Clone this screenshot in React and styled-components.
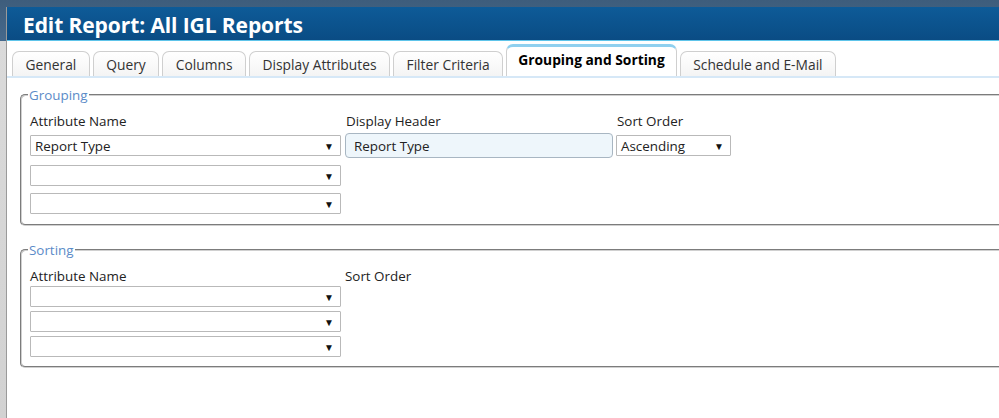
import React from "react";
import styled, { createGlobalStyle } from "styled-components";

const GlobalStyle = createGlobalStyle`
  html, body {
    margin: 0;
    padding: 0;
    overflow: hidden;
  }
  body {
    font-family: "Open Sans", "Liberation Sans", sans-serif;
    font-size: 13.4px;
    color: #222;
  }
`;

const Backdrop = styled.div`
  height: 418px;
  padding: 7px 0 0 6px;
  box-sizing: border-box;
  background: linear-gradient(
    to bottom,
    #3e5d7c 0,
    #46698c 41px,
    #dadada 41px,
    #d2d2d2 100%
  );
`;

const Dialog = styled.div`
  width: 1120px;
  height: 100%;
  background: #fff;
  border-left: 1px solid #9a9a9a;
`;

const TitleBar = styled.div`
  height: 33px;
  display: flex;
  align-items: center;
  padding-left: 16px;
  background: linear-gradient(to bottom, #0e5b98 0%, #0a4c84 100%);
  border-bottom: 1px solid #5ec4ea;
`;

const Title = styled.h1`
  margin: 0 0 -2px 0;
  font-size: 21px;
  font-weight: 700;
  color: #fff;
  letter-spacing: -0.1px;
`;

const TabBar = styled.div`
  display: flex;
  align-items: flex-end;
  gap: 3px;
  height: 35px;
  padding-left: 5px;
  border-bottom: 2px solid #d6e8f7;
`;

const Tab = styled.div`
  display: flex;
  align-items: center;
  justify-content: center;
  box-sizing: border-box;
  height: ${({ $active }) => ($active ? "32px" : "25px")};
  padding: 0 ${({ $active }) => ($active ? "11px" : "12.5px")};
  padding-bottom: ${({ $active }) => ($active ? "5px" : "0")};
  border: 1px solid #cfcfcf;
  border-bottom: none;
  border-top: ${({ $active }) =>
    $active ? "3px solid #8fd0ef" : "1px solid #cfcfcf"};
  border-radius: 7px 7px 0 0;
  background: ${({ $active }) =>
    $active ? "#fff" : "linear-gradient(to bottom, #ffffff, #f4f4f4)"};
  color: ${({ $active }) => ($active ? "#000" : "#333")};
  font-size: 13.8px;
  font-weight: ${({ $active }) => ($active ? 700 : 400)};
  white-space: nowrap;
`;

const Content = styled.div`
  padding: 8px 0 0 13px;
`;

const Group = styled.fieldset`
  margin: 0 0 ${({ $gap }) => $gap || 0}px 0;
  padding: 8px 8px ${({ $bottom }) => $bottom}px 8px;
  border: 2px groove #d0d0d0;
  border-radius: 5px;
  min-width: 0;
`;

const Legend = styled.legend`
  padding: 0 1px;
  margin-left: -2px;
  color: #5b8bc8;
  line-height: 18px;
`;

const LabelRow = styled.div`
  display: grid;
  grid-template-columns: 311px 269px 115px;
  column-gap: 3px;
  margin-bottom: ${({ $space }) => $space}px;
`;

const FormGrid = styled.div`
  display: grid;
  grid-template-columns: 311px 269px 115px;
  column-gap: 3px;
  row-gap: ${({ $rowGap }) => $rowGap}px;
  align-items: center;
`;

const Label = styled.div`
  line-height: 18px;
  color: #222;
  padding-left: ${({ $indent }) => $indent || 0}px;
`;

const SelectBox = styled.div`
  display: flex;
  align-items: center;
  justify-content: space-between;
  box-sizing: border-box;
  height: 21px;
  padding: 0 6px 0 4px;
  border: 1px solid #b9b9b9;
  border-radius: 1px;
  background: #fff;
  color: #222;
`;

const Arrow = styled.span`
  font-size: 10px;
  color: #111;
  line-height: 1;
`;

const TextInput = styled.div`
  display: flex;
  align-items: center;
  box-sizing: border-box;
  height: 25px;
  margin-left: 1px;
  padding-left: 8px;
  border: 1px solid #a8b6c2;
  border-radius: 4px;
  background: #eef6fb;
  color: #222;
`;

const Empty = styled.div``;

const Select = ({ value }) => (
  <SelectBox>
    <span>{value}</span>
    <Arrow>▼</Arrow>
  </SelectBox>
);

const tabs = [
  "General",
  "Query",
  "Columns",
  "Display Attributes",
  "Filter Criteria",
  "Grouping and Sorting",
  "Schedule and E-Mail",
];

export default function App() {
  return (
    <>
      <GlobalStyle />
      <Backdrop>
        <Dialog>
          <TitleBar>
            <Title>Edit Report: All IGL Reports</Title>
          </TitleBar>
          <TabBar>
            {tabs.map((t) => (
              <Tab key={t} $active={t === "Grouping and Sorting"}>
                {t}
              </Tab>
            ))}
          </TabBar>
          <Content>
            <Group $gap={15} $bottom={10}>
              <Legend>Grouping</Legend>
              <LabelRow $space={3}>
                <Label>Attribute Name</Label>
                <Label $indent={2}>Display Header</Label>
                <Label $indent={1}>Sort Order</Label>
              </LabelRow>
              <FormGrid $rowGap={7}>
                <Select value="Report Type" />
                <TextInput>Report Type</TextInput>
                <Select value="Ascending" />
                <Select value="" />
                <Empty />
                <Empty />
                <Select value="" />
                <Empty />
                <Empty />
              </FormGrid>
            </Group>
            <Group $bottom={9}>
              <Legend>Sorting</Legend>
              <LabelRow $space={1}>
                <Label>Attribute Name</Label>
                <Label $indent={1}>Sort Order</Label>
              </LabelRow>
              <FormGrid $rowGap={4}>
                <Select value="" />
                <Empty />
                <Empty />
                <Select value="" />
                <Empty />
                <Empty />
                <Select value="" />
                <Empty />
                <Empty />
              </FormGrid>
            </Group>
          </Content>
        </Dialog>
      </Backdrop>
    </>
  );
}
